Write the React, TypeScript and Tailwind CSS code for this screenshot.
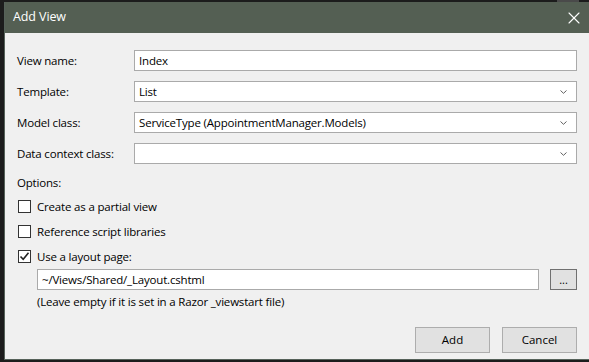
import { X } from "lucide-react";

const font = { fontFamily: "'Open Sans', 'Noto Sans', sans-serif" };

const Chevron = () => (
  <svg width="7" height="4" viewBox="0 0 7 4" className="shrink-0">
    <path d="M0.5 0.5 L3.5 3.3 L6.5 0.5" fill="none" stroke="#606060" strokeWidth="1" />
  </svg>
);

const Field = ({ label, value, select }: { label: string; value: string; select?: boolean }) => (
  <div className="flex items-center h-[21px]">
    <div className="w-[117px] shrink-0 text-[11.5px] tracking-[-0.18px] text-black">{label}</div>
    <div className="flex-1 h-[21px] bg-white border border-[#aaaaaa] flex items-center pl-[4px] pr-[9px]">
      <span className="flex-1 text-[11.5px] tracking-[-0.18px] text-black leading-none">{value}</span>
      {select && <Chevron />}
    </div>
  </div>
);

const Check = ({ label, checked }: { label: string; checked?: boolean }) => (
  <div className="flex items-center h-[25px] pl-[1px]">
    <div className="w-[13px] h-[13px] border border-[#333333] bg-white flex items-center justify-center shrink-0">
      {checked && (
        <svg width="11" height="11" viewBox="0 0 11 11">
          <path d="M1.5 5.5 L4.2 8.3 L9.5 1.8" fill="none" stroke="#222222" strokeWidth="1.6" />
        </svg>
      )}
    </div>
    <span className="ml-[6px] text-[11.5px] tracking-[-0.18px] text-black">{label}</span>
  </div>
);

export default function App() {
  return (
    <div className="w-[589px] h-[362px] bg-[#1c1c1c] flex flex-col pb-[2px] overflow-hidden" style={font}>
      <div className="h-[2px] flex shrink-0">
        <div className="ml-[557px] w-[22px] bg-[#4a4a4a]" />
      </div>
      <div className="flex-1 ml-[4px] border-l border-b border-[#56625a] bg-[#f0f0f0] flex flex-col">
        <div className="h-[31px] shrink-0 bg-[#545f53] flex items-center pl-[8px] pr-[5px]">
          <span className="flex-1 text-[12.5px] tracking-[-0.1px] text-white">Add View</span>
          <X size={20} strokeWidth={1.3} className="text-white" />
        </div>

        <div className="flex flex-col pl-[12px] pr-[12px] pt-[17px]">
          <div className="flex flex-col gap-[10px]">
            <Field label="View name:" value="Index" />
            <Field label="Template:" value="List" select />
            <Field label="Model class:" value="ServiceType (AppointmentManager.Models)" select />
            <Field label="Data context class:" value="" select />
          </div>

          <div className="mt-[11px] h-[16px] text-[11.5px] tracking-[-0.18px] text-black leading-[16px]">Options:</div>
          <div className="mt-[3px] flex flex-col">
            <Check label="Create as a partial view" />
            <Check label="Reference script libraries" />
            <Check label="Use a layout page:" checked />
          </div>

          <div className="flex items-center pl-[20px] h-[21px]">
            <div className="flex-1 h-[21px] bg-white border border-[#aaaaaa] flex items-center pl-[4px]">
              <span className="text-[11.5px] tracking-[-0.18px] text-black leading-none">~/Views/Shared/_Layout.cshtml</span>
            </div>
            <div className="ml-[11px] w-[27px] h-[21px] bg-[#e1e1e1] border border-[#707070] flex items-center justify-center text-[11px] text-black leading-none">
              ...
            </div>
          </div>
          <div className="pl-[20px] mt-[4px] h-[16px] text-[11.5px] tracking-[-0.18px] leading-[16px] text-black">
            (Leave empty if it is set in a Razor _viewstart file)
          </div>

          <div className="mt-[17px] flex justify-end gap-[12px]">
            <div className="w-[75px] h-[26px] bg-[#e1e1e1] border border-[#adadad] flex items-center justify-center text-[11.5px] text-black">
              Add
            </div>
            <div className="w-[75px] h-[26px] bg-[#e1e1e1] border border-[#adadad] flex items-center justify-center text-[11.5px] text-black">
              Cancel
            </div>
          </div>
        </div>
      </div>
    </div>
  );
}
